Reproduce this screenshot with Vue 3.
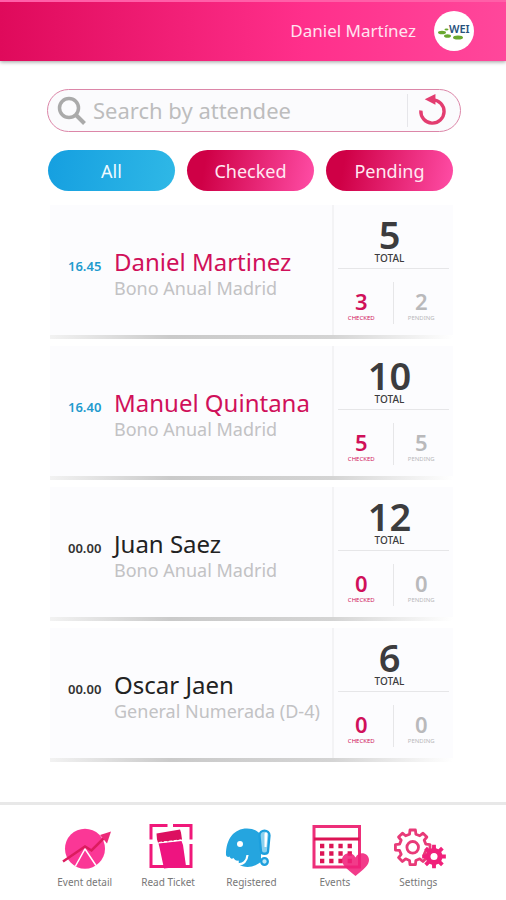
<script setup>
import { ref, computed } from 'vue'

const query = ref('')
const filter = ref('All')
const filters = ['All', 'Checked', 'Pending']

const attendees = [
  { time: '16.45', name: 'Daniel Martinez', ticket: 'Bono Anual Madrid', total: 5, checked: 3, pending: 2 },
  { time: '16.40', name: 'Manuel Quintana', ticket: 'Bono Anual Madrid', total: 10, checked: 5, pending: 5 },
  { time: '00.00', name: 'Juan Saez', ticket: 'Bono Anual Madrid', total: 12, checked: 0, pending: 0 },
  { time: '00.00', name: 'Oscar Jaen', ticket: 'General Numerada (D-4)', total: 6, checked: 0, pending: 0 },
]

const visible = computed(() =>
  attendees.filter((a) => {
    if (!a.name.toLowerCase().includes(query.value.toLowerCase())) return false
    if (filter.value === 'Checked') return a.checked > 0
    if (filter.value === 'Pending') return a.checked === 0
    return true
  }),
)

function reset() {
  query.value = ''
  filter.value = 'All'
}

// Outline of a gear with flat teeth, centred on (cx, cy)
function gear(cx, cy, teeth, inner, outer) {
  const step = (Math.PI * 2) / teeth
  const points = []
  for (let i = 0; i < teeth; i++) {
    const a = i * step - Math.PI / 2
    for (const [offset, r] of [[-0.3, inner], [-0.2, outer], [0.2, outer], [0.3, inner]]) {
      points.push(`${(cx + Math.cos(a + offset * step) * r).toFixed(2)} ${(cy + Math.sin(a + offset * step) * r).toFixed(2)}`)
    }
  }
  return `M${points.join('L')}Z`
}
const bigGear = gear(20.7, 23.3, 8, 13.5, 17.5)
const smallGear = gear(42, 32.5, 8, 8.5, 12)
</script>

<template>
  <div class="app">
    <header class="topbar">
      <span class="user">Daniel Martínez</span>
      <svg class="avatar" viewBox="0 0 40 40" role="img" aria-label="WEI">
        <circle cx="20" cy="20" r="20" fill="#fff" />
        <g fill="#69a82f">
          <ellipse cx="8" cy="21.500" rx="4" ry="1.800" />
          <ellipse cx="12.500" cy="18.500" rx="2" ry="1" />
          <ellipse cx="13.500" cy="25" rx="3.500" ry="1.800" />
          <ellipse cx="24" cy="26.500" rx="5" ry="2" />
        </g>
        <text x="15" y="22" class="logo-text">WEI</text>
      </svg>
    </header>

    <main class="content">
      <form class="search" role="search" @submit.prevent>
        <svg class="magnifier" viewBox="0 0 30 30" aria-hidden="true">
          <circle cx="12" cy="12" r="9.500" fill="none" stroke="#aaa" stroke-width="3.500" />
          <path d="M19 19l8.500 8.500" stroke="#aaa" stroke-width="4" />
        </svg>
        <input v-model="query" type="text" aria-label="Search by attendee" placeholder="Search by attendee" />
        <button class="reset" type="button" aria-label="Reload" @click="reset">
          <svg viewBox="0 0 32 34" aria-hidden="true">
            <path d="M4 17A12 12 0 1 0 16 6" fill="none" stroke="#e33d70" stroke-width="3.500" />
            <path d="M8 5.500L19 0v11z" fill="#e33d70" />
          </svg>
        </button>
      </form>

      <div class="filters">
        <button
          v-for="f in filters"
          :key="f"
          type="button"
          class="filter"
          :class="{ active: f === filter }"
          @click="filter = f"
        >{{ f }}</button>
      </div>

      <section class="list">
        <article v-for="a in visible" :key="a.name" class="card" :class="{ entered: a.checked > 0 }">
          <div class="info">
            <time class="time">{{ a.time }}</time>
            <div class="who">
              <h2>{{ a.name }}</h2>
              <p>{{ a.ticket }}</p>
            </div>
          </div>
          <div class="stats">
            <div class="total">
              <strong>{{ a.total }}</strong>
              <span>TOTAL</span>
            </div>
            <div class="split">
              <div class="count checked">
                <strong>{{ a.checked }}</strong>
                <span>CHECKED</span>
              </div>
              <div class="count">
                <strong>{{ a.pending }}</strong>
                <span>PENDING</span>
              </div>
            </div>
          </div>
        </article>
      </section>
    </main>

    <nav class="tabs">
      <a href="#detail">
        <svg viewBox="0 0 52 48" aria-hidden="true">
          <circle cx="26" cy="24.700" r="20" fill="#fb3796" />
          <path d="M16.500 42l9.500-17 11 16.500" fill="none" stroke="#fff" stroke-width="1.500" />
          <path d="M4 37.500L26 22.500l6.500 4L46 13" fill="none" stroke="#dc1c5e" stroke-width="2.500" />
          <path d="M41 11l11-3.500-4 12z" fill="#ec2a78" />
        </svg>
        <span>Event detail</span>
      </a>
      <a href="#read">
        <svg viewBox="0 0 52 48" aria-hidden="true">
          <path d="M25.500 1.500H9v14M31 1.500h18v14M9 20v22.500h40V20" fill="none" stroke="#f0187a" stroke-width="3" />
          <path d="M14.500 9.500L38 5.500l1 3 1 7-24 3-1-3z" fill="#dc1060" />
          <path d="M16.500 19.500l23-2.500 1.500 4 3 21-22 2.500-4.500-21z" fill="#ee1480" />
          <path d="M17 18.500l22-2.500" stroke="#fff" stroke-width="1.200" stroke-dasharray="3 2" />
        </svg>
        <span>Read Ticket</span>
      </a>
      <a href="#registered" aria-current="page">
        <svg viewBox="0 0 52 48" aria-hidden="true">
          <path d="M1 31C1 15 9 4.500 22 4.500c6 0 10 2 14 6v27c-6 6-16 7.500-23 2.500 1-1 1-2 .5-3.500-2 .5-4-.5-5-2.500-2 1.500-3 .5-4-1.500-1 1-3 .5-3.500-1.500z" fill="#25a5df" />
          <path d="M13 40c5 1 9-3 9.500-9" fill="none" stroke="#fff" stroke-width="2.200" />
          <circle cx="15" cy="20" r="3" fill="#fff" />
          <path d="M34.500 11.500c0-6.500 10-6.500 10 0l-1.500 16c-.5 3-6.500 3-7 0z" fill="#8bd1ef" stroke="#1c9fdd" stroke-width="2.300" />
          <path d="M39.500 10c0-2 3-2 3 0l-1 13h-2z" fill="#fff" />
          <circle cx="39.500" cy="37.500" r="3.300" fill="#bce7f8" stroke="#1c9fdd" stroke-width="2.300" />
        </svg>
        <span>Registered</span>
      </a>
      <a href="#events">
        <svg viewBox="0 0 52 48" aria-hidden="true">
          <rect x="5" y="2.500" width="45.500" height="40.500" fill="none" stroke="#ed2e79" stroke-width="3" />
          <path d="M5 15h45.500" stroke="#dc1455" stroke-width="3" />
          <path d="M11 22h33M11 29.500h33M11 37h33" stroke="#dc1455" stroke-width="4.300" stroke-dasharray="4.300 4.900" />
          <path d="M46.500 52C38 45 33 41 33 36c0-7 10-9.500 13.500-2.500C50 26.500 60 29 60 36c0 5-5 9-13.500 16z" fill="#f0207a" fill-opacity=".88" />
        </svg>
        <span>Events</span>
      </a>
      <a href="#settings">
        <svg viewBox="0 0 52 48" aria-hidden="true">
          <path :d="bigGear" fill="none" stroke="#e83a78" stroke-width="2.800" stroke-linejoin="round" />
          <circle cx="20.700" cy="23.300" r="5.800" fill="none" stroke="#e83a78" stroke-width="2.800" />
          <path :d="smallGear" fill="#f0207a" />
          <circle cx="42" cy="32.500" r="3.500" fill="#fff" />
        </svg>
        <span>Settings</span>
      </a>
    </nav>
  </div>
</template>

<style>
body {
  margin: 0;
  background: #fff;
}
</style>

<style scoped>
.app {
  display: flex;
  flex-direction: column;
  min-height: 100vh;
  font-family: "Noto Sans", sans-serif;
  color: #222;
}

.topbar {
  display: flex;
  align-items: center;
  justify-content: flex-end;
  gap: 18px;
  box-sizing: border-box;
  height: 61px;
  padding: 0 32px 2px 16px;
  border-top: 2px solid #ff5fa8;
  background: linear-gradient(90deg, #df0a5b, #ff2f8b 60%, #ff479b);
  box-shadow: 0 1px 4px rgba(0, 0, 0, 0.4);
}
.user {
  color: #ffe3f0;
  font-size: 17px;
}
.avatar {
  width: 40px;
  height: 40px;
}
.logo-text {
  font: 600 11px "Noto Sans", sans-serif;
  fill: #27527c;
}

.content {
  padding: 28px 45px 40px 47px;
}

.search {
  display: flex;
  align-items: center;
  box-sizing: border-box;
  height: 43px;
  padding: 0 12px 0 9px;
  border: 1px solid #dc86a8;
  border-radius: 22px;
  background: #fbfbfd;
}
.magnifier {
  flex: none;
  width: 30px;
  height: 30px;
}
.search input {
  flex: 1;
  min-width: 0;
  padding: 0 6px 2px;
  border: 0;
  outline: 0;
  background: none;
  color: #555;
  font-family: inherit;
  font-size: 22px;
}
.search input::placeholder {
  color: #bdbdbd;
  opacity: 1;
}
.reset {
  display: flex;
  padding: 0 0 0 9px;
  border: 0;
  border-left: 1px solid #e6e6ea;
  background: none;
}
.reset svg {
  width: 31px;
  height: 33px;
}

.filters {
  display: grid;
  grid-template-columns: repeat(3, 1fr);
  gap: 12px;
  padding: 18px 8px 0 1px;
}
.filter {
  height: 41px;
  padding: 0;
  border: 0;
  border-radius: 21px;
  background: linear-gradient(100deg, #cf0046 15%, #ff4da6);
  color: #ffe9f2;
  font-family: inherit;
  font-size: 18px;
}
.filter.active {
  background: linear-gradient(100deg, #159fe0, #2fb8e6);
  color: #f0faff;
}

.list {
  display: grid;
  gap: 7px;
  padding: 14px 8px 0 3px;
}
.card {
  display: grid;
  grid-template-columns: 1fr 121px;
  height: 134px;
  background:
    linear-gradient(90deg, #f2f2f2, #cacaca 30%, #d4d4d4 70%, #fff) bottom / 100% 4px no-repeat,
    #fcfcfe;
}
.info {
  display: flex;
  align-items: baseline;
  gap: 12px;
  padding: 43px 0 0 18px;
  min-width: 0;
}
.time {
  width: 34px;
  color: #333;
  font-size: 13px;
  font-weight: 600;
}
.who {
  white-space: nowrap;
}
h2 {
  margin: 0;
  font-size: 24px;
  font-weight: 400;
  line-height: 28px;
}
p {
  margin: 0;
  color: #c2c2c4;
  font-size: 18px;
  line-height: 24px;
}
.entered .time {
  color: #1f9bce;
}
.entered h2 {
  color: #d0105a;
}

.stats {
  display: flex;
  flex-direction: column;
  margin-bottom: 4px;
  padding: 0 4px;
  border-left: 2px solid #f3f3f5;
}
.stats strong,
.stats span {
  display: block;
  text-align: center;
}
.total {
  padding: 11px 8px 4px 0;
  border-bottom: 1px solid #e6e6e8;
  color: #3c3c3e;
}
.total strong {
  font-size: 38px;
  font-weight: 600;
  line-height: 36px;
}
.total span {
  font-size: 10px;
  font-weight: 500;
  line-height: 12px;
}
.split {
  display: grid;
  grid-template-columns: 1fr 1fr;
  padding-top: 13px;
}
.count {
  padding: 6px 0 2px;
  color: #b9b9bb;
}
.checked {
  padding-right: 8px;
  border-right: 1px solid #e6e6e8;
  color: #d0105a;
}
.count strong {
  font-size: 22px;
  font-weight: 600;
  line-height: 26px;
}
.count span {
  font-size: 6px;
  line-height: 8px;
}

.tabs {
  display: grid;
  grid-template-columns: repeat(5, 1fr);
  margin-top: auto;
  padding: 19px 46px 12px 43px;
  border-top: 3px solid #e8e8e8;
}
.tabs a {
  display: flex;
  flex-direction: column;
  align-items: center;
  gap: 3px;
  color: #777;
  font-size: 10px;
  line-height: 14px;
  text-decoration: none;
  white-space: nowrap;
}
.tabs svg {
  width: 52px;
  height: 48px;
  overflow: visible;
}
</style>
